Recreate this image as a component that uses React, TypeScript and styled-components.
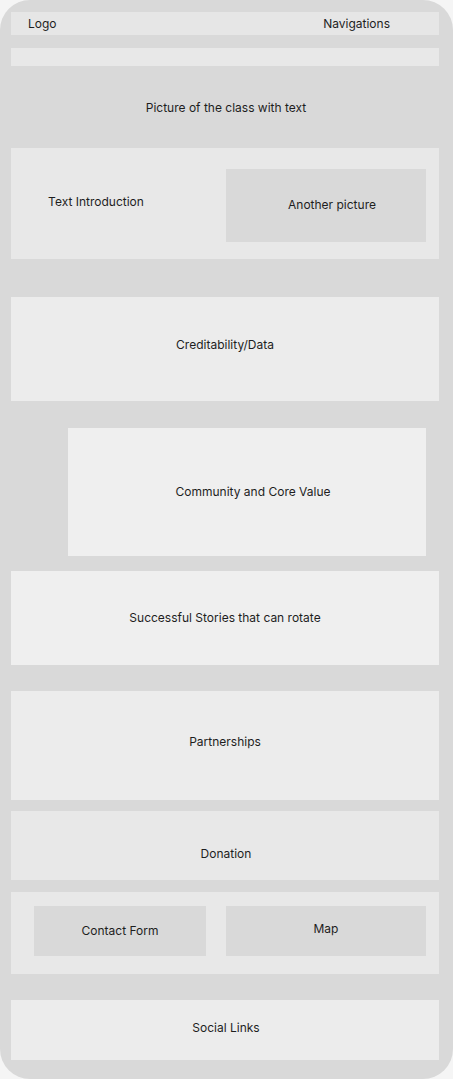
import React from "react";
import styled, { createGlobalStyle } from "styled-components";

const Global = createGlobalStyle`
  html, body { margin: 0; padding: 0; background: #f5f5f5; }
  body { font-family: Inter, "Noto Sans", sans-serif; color: #1e1e1e; }
  * { box-sizing: border-box; }
`;

const Frame = styled.div`
  width: 453px;
  height: 1079px;
  background: #d9d9d9;
  border-radius: 30px;
  padding: 12px 14px 0 11px;
  display: flex;
  flex-direction: column;
  overflow: hidden;
`;

const Label = styled.span`
  font-size: 12px;
  line-height: 16px;
  white-space: nowrap;
`;

const Header = styled.header`
  height: 23px;
  background: #e6e6e6;
  display: flex;
  align-items: center;
  justify-content: space-between;
  padding: 0 49px 0 17px;
`;

const Strip = styled.div`
  height: 18px;
  margin-top: 13px;
  background: #e8e8e8;
`;

const Hero = styled.div`
  height: 82px;
  display: flex;
  align-items: center;
  justify-content: center;
  padding: 1px 0 0 2px;
`;

const Section = styled.section<{
  $h: number;
  $bg: string;
  $mt?: number;
  $ml?: number;
  $mr?: number;
  $dy?: number;
  $dx?: number;
}>`
  height: ${(p) => p.$h}px;
  margin-top: ${(p) => p.$mt ?? 0}px;
  margin-left: ${(p) => p.$ml ?? 0}px;
  margin-right: ${(p) => p.$mr ?? 0}px;
  background: ${(p) => p.$bg};
  display: flex;
  align-items: center;
  justify-content: center;
  padding-top: ${(p) => Math.max(0, p.$dy ?? 0)}px;
  padding-bottom: ${(p) => Math.max(0, -(p.$dy ?? 0))}px;
  padding-left: ${(p) => Math.max(0, p.$dx ?? 0)}px;
  padding-right: ${(p) => Math.max(0, -(p.$dx ?? 0))}px;
`;

const SplitSection = styled.section<{ $h: number; $mt?: number; $top: number }>`
  height: ${(p) => p.$h}px;
  margin-top: ${(p) => p.$mt ?? 0}px;
  background: #e8e8e8;
  display: grid;
  grid-template-columns: 1fr 200px;
  column-gap: 20px;
  padding: ${(p) => p.$top}px 13px 0 23px;
  align-items: start;
`;

const IntroSection = styled(SplitSection)`
  column-gap: 0;
  padding-left: 0;
`;

const IntroText = styled.div`
  height: 73px;
  display: flex;
  align-items: center;
  justify-content: center;
  padding: 0 45px 8px 0;
`;

const InnerBox = styled.div<{ $h: number; $dy?: number; $dx?: number }>`
  height: ${(p) => p.$h}px;
  background: #d9d9d9;
  display: flex;
  align-items: center;
  justify-content: center;
  padding-top: ${(p) => Math.max(0, p.$dy ?? 0)}px;
  padding-bottom: ${(p) => Math.max(0, -(p.$dy ?? 0))}px;
  padding-left: ${(p) => Math.max(0, p.$dx ?? 0)}px;
  padding-right: ${(p) => Math.max(0, -(p.$dx ?? 0))}px;
`;

export default function App() {
  return (
    <>
      <Global />
      <Frame>
        <Header>
          <Label>Logo</Label>
          <Label>Navigations</Label>
        </Header>
        <Strip />
        <Hero>
          <Label>Picture of the class with text</Label>
        </Hero>
        <IntroSection $h={111} $top={21}>
          <IntroText>
            <Label>Text Introduction</Label>
          </IntroText>
          <InnerBox $h={73} $dy={-2} $dx={12}>
            <Label>Another picture</Label>
          </InnerBox>
        </IntroSection>
        <Section $h={104} $mt={38} $bg="#ececec" $dy={-8}>
          <Label>Creditability/Data</Label>
        </Section>
        <Section $h={128} $mt={27} $ml={57} $mr={13} $bg="#efefef" $dx={12}>
          <Label>Community and Core Value</Label>
        </Section>
        <Section $h={94} $mt={15} $bg="#efefef" $dy={-1}>
          <Label>Successful Stories that can rotate</Label>
        </Section>
        <Section $h={109} $mt={26} $bg="#ececec" $dy={-7}>
          <Label>Partnerships</Label>
        </Section>
        <Section $h={69} $mt={11} $bg="#e8e8e8" $dy={16} $dx={2}>
          <Label>Donation</Label>
        </Section>
        <SplitSection $h={82} $mt={12} $top={14}>
          <InnerBox $h={50} $dy={0}>
            <Label>Contact Form</Label>
          </InnerBox>
          <InnerBox $h={50} $dy={-4}>
            <Label>Map</Label>
          </InnerBox>
        </SplitSection>
        <Section $h={60} $mt={26} $bg="#ececec" $dy={-4} $dx={2}>
          <Label>Social Links</Label>
        </Section>
      </Frame>
    </>
  );
}
